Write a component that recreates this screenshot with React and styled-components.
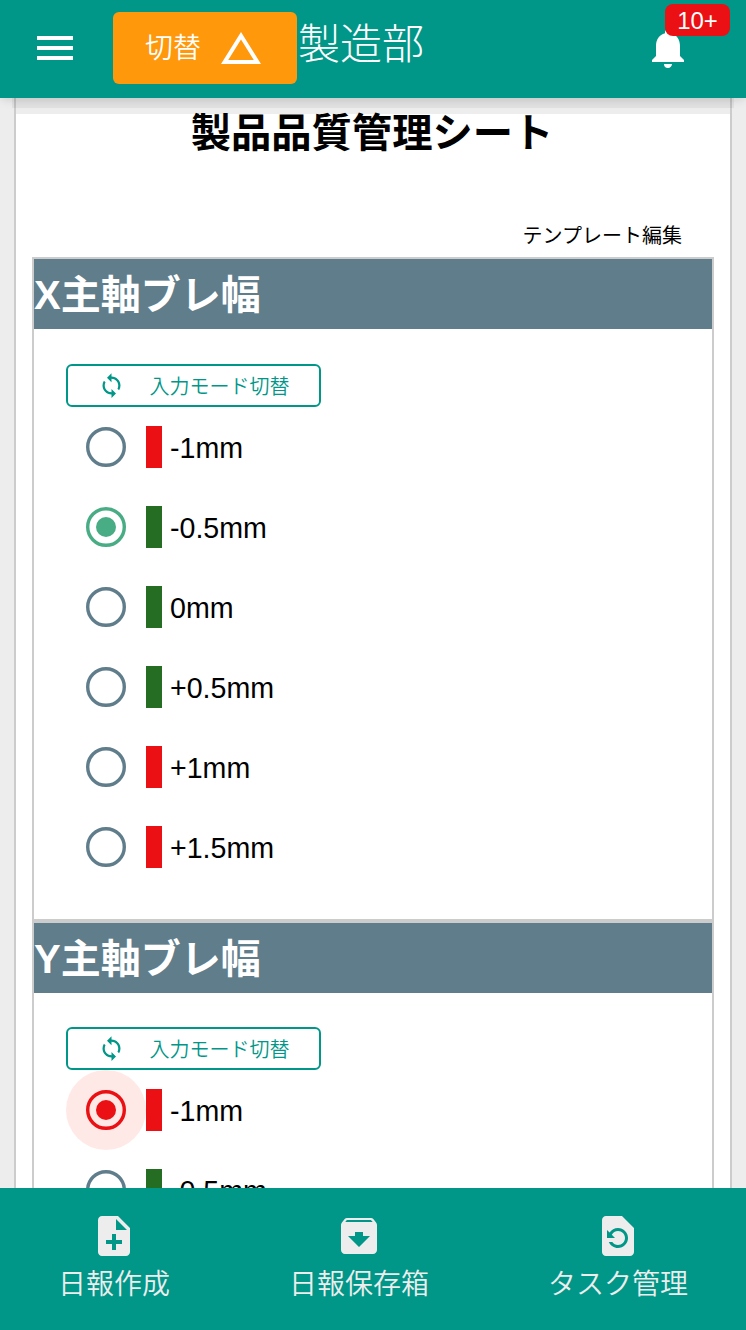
import React from 'react';
import styled, { createGlobalStyle } from 'styled-components';
import {
  MdMenu,
  MdChangeHistory,
  MdNotifications,
  MdSync,
  MdNoteAdd,
  MdArchive,
  MdRestorePage,
} from 'react-icons/md';

const GlobalStyle = createGlobalStyle`
  * { box-sizing: border-box; }
  body {
    margin: 0;
    background: #ededed;
    color: #000;
    font-family: "Liberation Sans", "Noto Sans CJK JP", sans-serif;
  }
  button { font-family: inherit; cursor: pointer; margin: 0; }
  svg { display: block; flex: none; }
`;

const Screen = styled.div`
  width: 746px;
  height: 1330px;
  display: flex;
  flex-direction: column;
  overflow: hidden;
`;

const Header = styled.header`
  flex: none;
  height: 98px;
  padding: 0 16px 2px 31px;
  display: flex;
  align-items: center;
  background: #009688;
  color: #fff;
  position: relative;
  z-index: 1;
  box-shadow: 0 4px 8px -2px rgba(0, 0, 0, 0.08), 0 22px 0 -12px rgba(0, 0, 0, 0.05),
    0 32px 0 -16px rgba(0, 0, 0, 0.07), 0 2px 12px rgba(0, 0, 0, 0.05);
`;

const IconButton = styled.button`
  display: flex;
  padding: 0;
  border: 0;
  background: none;
  color: inherit;
`;

const SwitchButton = styled.button`
  width: 184px;
  height: 72px;
  margin-left: 34px;
  padding: 0 0 0 32px;
  display: flex;
  align-items: center;
  gap: 16px;
  border: 0;
  border-radius: 6px;
  background: #ff980a;
  color: #fff;
  font-size: 28px;
  font-weight: 350;
`;

const SwitchLabel = styled.span`
  line-height: 40px;
  padding-top: 1px;
`;

const Department = styled.h1`
  flex: 1;
  margin: -6px 0 0 1px;
  font-size: 42px;
  line-height: 60px;
  font-weight: 300;
`;

const Bell = styled(IconButton)`
  position: relative;
  margin-right: 38px;
`;

const Badge = styled.span`
  position: absolute;
  left: 21px;
  top: -20px;
  width: 65px;
  height: 32px;
  border-radius: 8px;
  background: #eb1013;
  color: #fff;
  font-size: 24px;
  line-height: 33px;
  text-align: center;
`;

const Sheet = styled.main`
  flex: 1;
  min-height: 0;
  overflow: hidden;
  margin: 0 14px;
  padding: 0 16px;
  border: solid #ccc;
  border-width: 0 2px;
  background: #fff;
`;

const SheetTitle = styled.h2`
  margin: 6px 2px 0 0;
  font-size: 40.3px;
  line-height: 60px;
  font-weight: 700;
  text-align: center;
`;

const TemplateLink = styled.a`
  display: block;
  margin: 57px 32px 6px 0;
  font-size: 20px;
  line-height: 30px;
  text-align: right;
`;

const Section = styled.section`
  border: 2px solid #ccc;
`;

const SectionTitle = styled.h3`
  height: 70px;
  margin: 0;
  background: #607d8b;
  color: #fff;
  font-size: 40px;
  line-height: 72px;
  font-weight: 700;
`;

const SectionBody = styled.div`
  padding: ${(p) => p.$top}px 32px 32px;
`;

const ModeButton = styled.button`
  width: 255px;
  height: 43px;
  padding: 0 0 1px 30px;
  display: flex;
  align-items: center;
  gap: 24.5px;
  border: 2px solid #009688;
  border-radius: 6px;
  background: #fff;
  color: #009688;
  font-size: 20px;
  font-weight: 350;
  white-space: nowrap;
`;

const Option = styled.label`
  height: 80px;
  display: flex;
  align-items: center;
  font-size: 28.6px;
`;

const OptionLabel = styled.span`
  line-height: 40px;
  padding-top: 1px;
`;

const Ripple = styled.span`
  width: 80px;
  height: 80px;
  display: flex;
  align-items: center;
  justify-content: center;
  border-radius: 50%;
  background: ${(p) => (p.$active ? '#ffe9e6' : 'transparent')};
`;

const Ring = styled.svg`
  width: 40px;
  height: 40px;
  color: ${(p) => p.$color};
`;

const Marker = styled.span`
  width: 16px;
  height: 42px;
  margin-right: 8px;
  background: ${(p) => (p.$ok ? '#266d24' : '#eb1013')};
`;

const BottomNav = styled.nav`
  flex: none;
  height: 142px;
  padding: 24px 58px 0;
  display: flex;
  justify-content: space-between;
  background: #009688;
  color: #ededed;
`;

const NavItem = styled.a`
  display: flex;
  flex-direction: column;
  align-items: center;
  gap: 3px;
  font-size: 28px;
  line-height: 44px;
  font-weight: 350;
`;

const OPTIONS = [
  { label: '-1mm', ok: false },
  { label: '-0.5mm', ok: true },
  { label: '0mm', ok: true },
  { label: '+0.5mm', ok: true },
  { label: '+1mm', ok: false },
  { label: '+1.5mm', ok: false },
];

const SECTIONS = [
  { title: 'X主軸ブレ幅', top: 35, options: OPTIONS, selected: 1, color: '#48ac85', focused: false },
  { title: 'Y主軸ブレ幅', top: 34, options: OPTIONS.slice(0, 2), selected: 0, color: '#eb1013', focused: true },
];

function RadioOption({ option, checked, color, focused }) {
  return (
    <Option>
      <Ripple $active={checked && focused}>
        <Ring viewBox="0 0 40 40" $color={checked ? color : '#607d8b'}>
          <circle cx="20" cy="20" r="18.3" fill="none" stroke="currentColor" strokeWidth="3.4" />
          {checked && <circle cx="20" cy="20" r="10" fill="currentColor" />}
        </Ring>
      </Ripple>
      <Marker $ok={option.ok} />
      <OptionLabel>{option.label}</OptionLabel>
    </Option>
  );
}

function Measurement({ section }) {
  return (
    <Section>
      <SectionTitle>{section.title}</SectionTitle>
      <SectionBody $top={section.top}>
        <ModeButton>
          <MdSync size={27} />
          入力モード切替
        </ModeButton>
        {section.options.map((option, i) => (
          <RadioOption
            key={option.label}
            option={option}
            checked={i === section.selected}
            color={section.color}
            focused={section.focused}
          />
        ))}
      </SectionBody>
    </Section>
  );
}

export default function App() {
  return (
    <Screen lang="ja">
      <GlobalStyle />
      <Header>
        <IconButton aria-label="メニュー">
          <MdMenu size={48} />
        </IconButton>
        <SwitchButton>
          <SwitchLabel>切替</SwitchLabel>
          <MdChangeHistory size={48} />
        </SwitchButton>
        <Department>製造部</Department>
        <Bell aria-label="通知">
          <MdNotifications size={48} />
          <Badge>10+</Badge>
        </Bell>
      </Header>
      <Sheet>
        <SheetTitle>製品品質管理シート</SheetTitle>
        <TemplateLink>テンプレート編集</TemplateLink>
        {SECTIONS.map((section) => (
          <Measurement key={section.title} section={section} />
        ))}
      </Sheet>
      <BottomNav>
        <NavItem>
          <MdNoteAdd size={48} />
          日報作成
        </NavItem>
        <NavItem>
          <MdArchive size={48} />
          日報保存箱
        </NavItem>
        <NavItem>
          <MdRestorePage size={48} />
          タスク管理
        </NavItem>
      </BottomNav>
    </Screen>
  );
}
